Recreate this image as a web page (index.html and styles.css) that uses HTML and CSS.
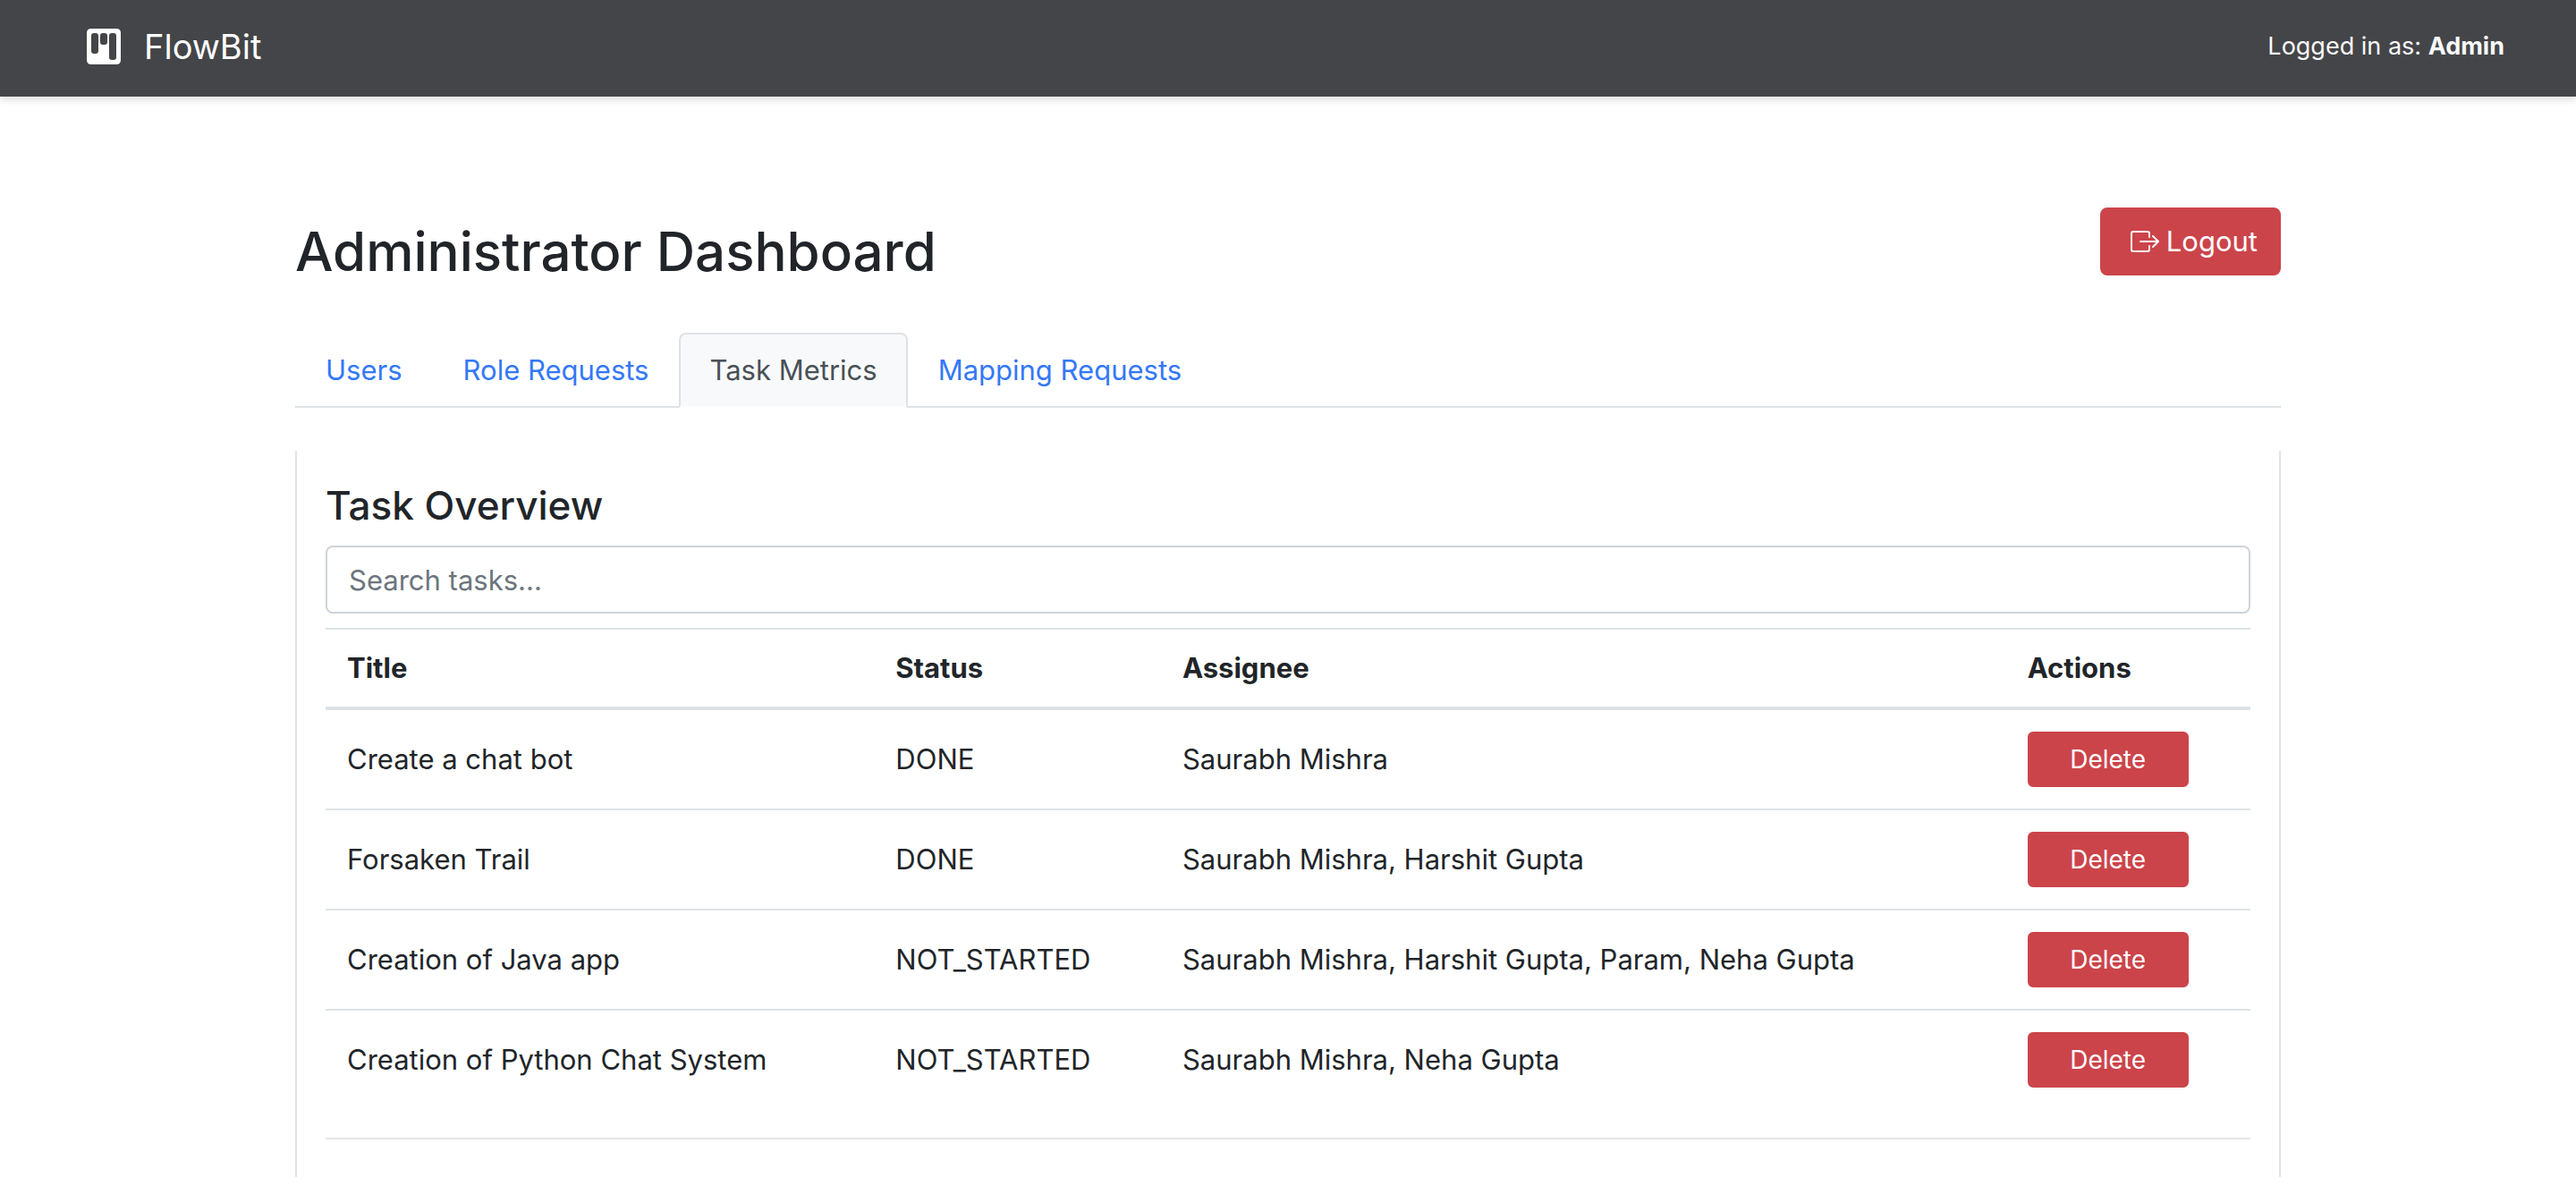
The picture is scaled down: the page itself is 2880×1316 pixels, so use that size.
FILE: index.html
```html
<!DOCTYPE html>
<html lang="en">
<head>
<meta charset="utf-8">
<meta name="viewport" content="width=device-width, initial-scale=1">
<title>FlowBit - Administrator Dashboard</title>
<link rel="stylesheet" href="styles.css">
</head>
<body>
<header class="navbar">
  <a class="brand" href="#">
    <svg class="brand-icon" viewBox="0 0 38 40" aria-hidden="true">
      <path fill="#fff" fill-rule="evenodd" d="M5 0H33Q38 0 38 5V35Q38 40 33 40H5Q0 40 0 35V5Q0 0 5 0ZM8 5Q5 5 5 8V25Q5 28 8 28H10Q13 28 13 25V8Q13 5 10 5ZM18 5Q15 5 15 8V15Q15 18 18 18H20Q23 18 23 15V8Q23 5 20 5ZM28 5Q25 5 25 8V32Q25 35 28 35H30Q33 35 33 32V8Q33 5 30 5Z"/>
    </svg>
    <span>FlowBit</span>
  </a>
  <span class="user">Logged in as: <strong>Admin</strong></span>
</header>

<main class="container">
  <div class="page-head">
    <h1 class="page-title">Administrator Dashboard</h1>
    <button class="btn btn-logout" type="button">
      <svg class="logout-icon" viewBox="0 0 32 24" fill="none" stroke="#fff" stroke-width="2" stroke-linecap="round" stroke-linejoin="round" aria-hidden="true">
        <path d="M21 7V3Q21 1 19 1H3Q1 1 1 3V21Q1 23 3 23H19Q21 23 21 21V17M11 12H31M25 6L31 12L25 18"/>
      </svg>
      <span>Logout</span>
    </button>
  </div>

  <nav class="tabs" aria-label="Dashboard sections">
    <a class="tab" href="#users">Users</a>
    <a class="tab" href="#roles">Role Requests</a>
    <a class="tab tab-active" href="#tasks" aria-current="page">Task Metrics</a>
    <a class="tab" href="#mapping">Mapping Requests</a>
  </nav>

  <section class="panel" id="tasks">
    <h2 class="panel-title">Task Overview</h2>
    <input class="search" type="text" placeholder="Search tasks..." aria-label="Search tasks">
    <table class="table">
      <colgroup>
        <col class="col-title"><col class="col-status"><col class="col-assignee"><col class="col-actions">
      </colgroup>
      <thead>
        <tr><th scope="col">Title</th><th scope="col">Status</th><th scope="col">Assignee</th><th scope="col">Actions</th></tr>
      </thead>
      <tbody>
        <tr><td>Create a chat bot</td><td>DONE</td><td>Saurabh Mishra</td><td><button class="btn btn-delete" type="button">Delete</button></td></tr>
        <tr><td>Forsaken Trail</td><td>DONE</td><td>Saurabh Mishra, Harshit Gupta</td><td><button class="btn btn-delete" type="button">Delete</button></td></tr>
        <tr><td>Creation of Java app</td><td>NOT_STARTED</td><td>Saurabh Mishra, Harshit Gupta, Param, Neha Gupta</td><td><button class="btn btn-delete" type="button">Delete</button></td></tr>
        <tr><td>Creation of Python Chat System</td><td>NOT_STARTED</td><td>Saurabh Mishra, Neha Gupta</td><td><button class="btn btn-delete" type="button">Delete</button></td></tr>
      </tbody>
    </table>
    <hr class="divider">
  </section>
</main>
</body>
</html>
```

FILE: styles.css
```css
*,
*::before,
*::after {
  box-sizing: border-box;
}

body {
  margin: 0;
  background: #fff;
  color: #212529;
  font-family: Inter, "Liberation Sans", sans-serif;
  font-size: 31px;
  line-height: 48px;
}

.navbar {
  display: flex;
  align-items: center;
  justify-content: space-between;
  padding: 22px 80px 26px 97px;
  background: #444548;
  box-shadow: 0 4px 8px rgba(0, 0, 0, 0.12);
}

.brand {
  display: flex;
  align-items: center;
  gap: 26px;
  color: #fff;
  font-size: 38px;
  line-height: 60px;
  text-decoration: none;
}

.brand-icon {
  width: 38px;
  height: 40px;
}

.user {
  color: #f8f9fa;
  font-size: 27px;
}

.container {
  width: 100%;
  max-width: 2280px;
  margin: 0 auto;
  padding: 124px 30px 0;
}

.page-head {
  display: flex;
  align-items: flex-start;
  justify-content: space-between;
}

.page-title {
  margin: 10px 0 52px;
  font-size: 60px;
  font-weight: 500;
  line-height: 78px;
}

.btn {
  border: 2px solid #cb444a;
  background: #cb444a;
  color: #fff;
  font-family: inherit;
  cursor: pointer;
}

.btn-logout {
  display: flex;
  align-items: center;
  gap: 8px;
  padding: 12px 24px 12px 32px;
  border-radius: 8px;
  font-size: 31px;
  line-height: 48px;
}

.logout-icon {
  width: 32px;
  height: 24px;
}

.tabs {
  display: flex;
  border-bottom: 2px solid #dee2e6;
}

.tab {
  margin-bottom: -2px;
  padding: 16px 32px;
  border: 2px solid transparent;
  border-radius: 8px 8px 0 0;
  color: #3478f6;
  text-decoration: none;
}

.tab-active {
  border-color: #dee2e6 #dee2e6 #fff;
  background: #f8f9fa;
  color: #495057;
}

.panel {
  margin-top: 48px;
  padding: 32px 32px 48px;
  border: solid #dee2e6;
  border-width: 0 2px;
}

.panel-title {
  margin: 0 0 16px;
  font-size: 44px;
  font-weight: 500;
  line-height: 58px;
}

.search {
  display: block;
  width: 100%;
  height: 76px;
  padding: 12px 24px;
  border: 2px solid #ced4da;
  border-radius: 8px;
  background: #fff;
  color: #495057;
  font: inherit;
}

.search::placeholder {
  color: #6c757d;
  opacity: 1;
}

.table {
  width: 100%;
  margin: 16px 0 32px;
  border-spacing: 0;
  table-layout: fixed;
}

.col-title {
  width: 28.5%;
}

.col-status {
  width: 14.9%;
}

.col-assignee {
  width: 43.9%;
}

.col-actions {
  width: 12.7%;
}

.table th,
.table td {
  padding: 24px;
  border-top: 2px solid #dee2e6;
  text-align: left;
}

.table th {
  border-bottom: 4px solid #dee2e6;
  font-weight: 700;
  line-height: 38px;
}

.table tbody tr:first-child td {
  border-top: 0;
}

.btn-delete {
  display: block;
  width: 180px;
  padding: 8px 16px;
  border-radius: 6px;
  font-size: 28px;
  line-height: 42px;
}

.divider {
  margin: 0;
  border: 0;
  border-top: 2px solid rgba(0, 0, 0, 0.1);
}

@media (max-width: 1200px) {
  .table {
    table-layout: auto;
  }
}
```
